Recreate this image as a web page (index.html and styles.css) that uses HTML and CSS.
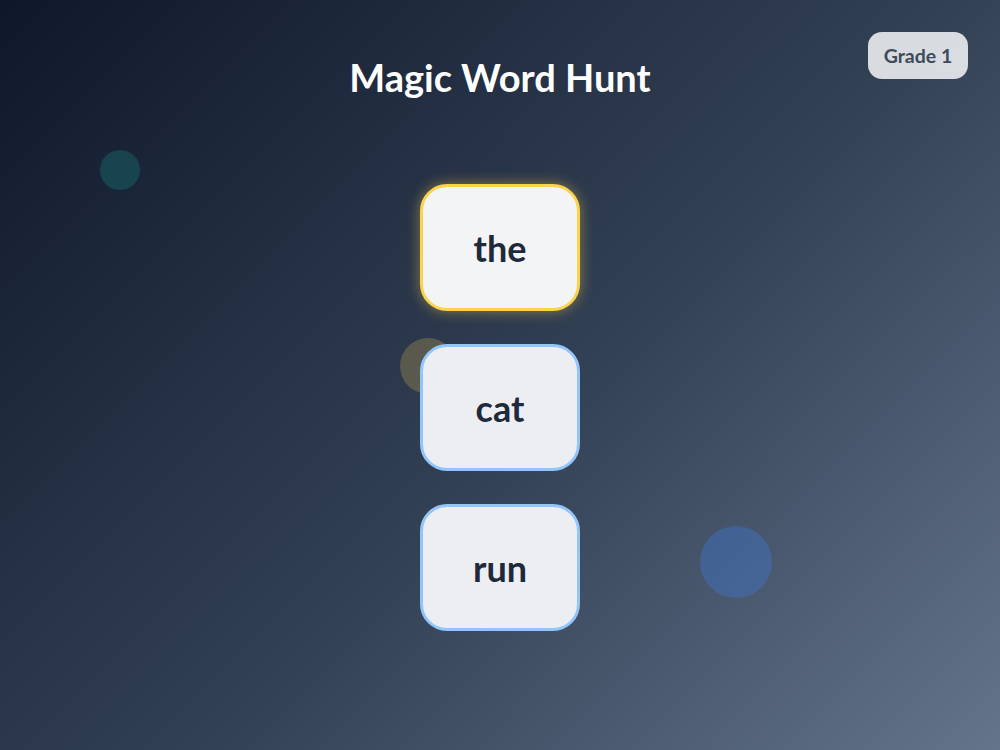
FILE: index.html
```html
<!DOCTYPE html>
<html lang="en">
<head>
<meta charset="utf-8">
<title>Magic Word Hunt</title>
<link rel="stylesheet" href="styles.css">
</head>
<body>
<div class="stage">
  <span class="blob blob-teal"></span>
  <span class="blob blob-yellow"></span>
  <span class="blob blob-blue"></span>
  <header class="top">
    <h1 class="title">Magic Word Hunt</h1>
    <span class="badge">Grade 1</span>
  </header>
  <main class="words">
    <div class="card card-active">the</div>
    <div class="card">cat</div>
    <div class="card">run</div>
  </main>
</div>
</body>
</html>
```

FILE: styles.css
```css
* { box-sizing: border-box; }
html, body { margin: 0; padding: 0; }
body {
  width: 1000px;
  height: 750px;
  overflow: hidden;
  font-family: Lato, "Noto Sans", sans-serif;
}
.stage {
  position: relative;
  width: 1000px;
  height: 750px;
  background: linear-gradient(135deg, #0f172a 0%, #334155 55%, #64748b 100%);
  display: flex;
  flex-direction: column;
  align-items: center;
}
.blob {
  position: absolute;
  border-radius: 50%;
}
.blob-teal {
  left: 100px; top: 150px; width: 40px; height: 40px;
  background: rgba(20, 184, 166, 0.22);
}
.blob-yellow {
  left: 400px; top: 338px; width: 56px; height: 56px;
  background: rgba(252, 211, 77, 0.22);
}
.blob-blue {
  left: 700px; top: 526px; width: 72px; height: 72px;
  background: rgba(59, 130, 246, 0.3);
}
.top {
  position: relative;
  width: 100%;
  height: 184px;
  display: flex;
  justify-content: center;
}
.title {
  margin: 55px 0 0;
  color: #ffffff;
  font-size: 38px;
  font-weight: 700;
  line-height: 44px;
}
.badge {
  position: absolute;
  top: 32px;
  right: 32px;
  width: 100px;
  height: 47px;
  border-radius: 14px;
  background: rgba(229, 231, 235, 0.93);
  color: #3f4a5a;
  font-size: 19.5px;
  font-weight: 700;
  display: flex;
  align-items: center;
  justify-content: center;
}
.words {
  position: relative;
  display: flex;
  flex-direction: column;
  gap: 33px;
}
.card {
  width: 160px;
  height: 127px;
  border: 3px solid #93c5fd;
  border-radius: 27px;
  background: #eceef1;
  color: #1e293b;
  font-size: 36px;
  font-weight: 700;
  display: flex;
  align-items: center;
  justify-content: center;
}
.card-active {
  border-color: #fcd34d;
  background: #f3f4f6;
  box-shadow: 0 0 14px rgba(252, 211, 77, 0.45);
}
```
